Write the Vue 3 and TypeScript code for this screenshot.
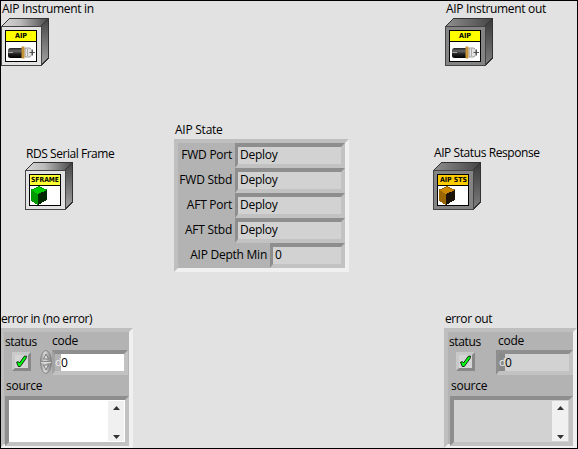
<script setup lang="ts">
type Kind = 'aip' | 'frame' | 'status'
interface Terminal { label: string; tag: string; kind: Kind; output: boolean; cls: string }

const leftTerminals: Terminal[] = [
  { label: 'AIP Instrument in', tag: 'AIP', kind: 'aip', output: false, cls: 'instrument' },
  { label: 'RDS Serial Frame', tag: 'SFRAME', kind: 'frame', output: false, cls: 'serial' },
]
const rightTerminals: Terminal[] = [
  { label: 'AIP Instrument out', tag: 'AIP', kind: 'aip', output: true, cls: 'instrument' },
  { label: 'AIP Status Response', tag: 'AIP STS', kind: 'status', output: true, cls: 'response' },
]
const columns = [
  { id: 'inputs', terminals: leftTerminals, error: 'error in (no error)', output: false },
  { id: 'outputs', terminals: rightTerminals, error: 'error out', output: true },
]
const states = [
  { name: 'FWD Port', value: 'Deploy' },
  { name: 'FWD Stbd', value: 'Deploy' },
  { name: 'AFT Port', value: 'Deploy' },
  { name: 'AFT Stbd', value: 'Deploy' },
]
const tagFill: Record<Kind, string> = { aip: '#ffff00', frame: '#ffff33', status: '#ffcc00' }
const tagWidth: Record<Kind, number> = { aip: 12, frame: 28, status: 27 }
const tagX: Record<Kind, number> = { aip: 14, frame: 6, status: 7 }
const cubeColors: Record<string, string[]> = {
  frame: ['#00cc00', '#009900', '#002b00'],
  status: ['#cc8800', '#996600', '#1c1408'],
}
</script>

<template>
  <main class="panel">
    <svg class="defs" width="0" height="0">
      <defs>
        <linearGradient id="topIn" x1="0" x2="1"><stop offset="0" stop-color="#d8d8d8" /><stop offset=".4" stop-color="#bbb" /><stop offset="1" stop-color="#444" /></linearGradient>
        <linearGradient id="sideIn" x1="0" y1="0" x2="0" y2="1"><stop offset="0" stop-color="#444" /><stop offset="1" stop-color="#a5a5a5" /></linearGradient>
        <linearGradient id="topOut" x1="0" x2="1"><stop offset="0" stop-color="#909090" /><stop offset="1" stop-color="#444" /></linearGradient>
        <linearGradient id="sideOut" x1="0" y1="0" x2="0" y2="1"><stop offset="0" stop-color="#383838" /><stop offset="1" stop-color="#808080" /></linearGradient>
        <linearGradient id="barrel" x1="0" y1="0" x2="0" y2="1"><stop offset="0" stop-color="#222" /><stop offset=".3" stop-color="#666" /><stop offset=".6" stop-color="#222" /><stop offset="1" stop-color="#000" /></linearGradient>
        <linearGradient id="knob" x1="0" x2="1"><stop offset="0" stop-color="#909090" /><stop offset=".4" stop-color="#ddd" /><stop offset="1" stop-color="#777" /></linearGradient>
      </defs>
    </svg>

    <section v-for="col in columns" :key="col.id" class="column" :class="col.id">
      <div v-for="t in col.terminals" :key="t.label" class="terminal" :class="t.cls">
        <span class="label">{{ t.label }}</span>
        <svg class="box" width="48" height="48" viewBox="0 0 48 48" shape-rendering="crispEdges">
          <path d="M0 8 8 0H48L40 8Z" :fill="t.output ? 'url(#topOut)' : 'url(#topIn)'" />
          <path d="M40 8 48 0V40L40 48Z" :fill="t.output ? 'url(#sideOut)' : 'url(#sideIn)'" />
          <path d="M.5 8.5 8.5.5H47.5V40L40 47.5M47.5.5 40 8" fill="none" stroke="#333" />
          <rect x=".5" y="8.5" width="40" height="39" :fill="t.output ? '#848484' : '#e2e2e2'" stroke="#444" />
          <rect x="4.5" y="12.5" width="31" height="31" fill="#fff" stroke="#000" />
          <rect x="5" y="13" width="30" height="10" :fill="tagFill[t.kind]" />
          <rect x="5" y="23" width="30" height="1" fill="#000" />
          <text class="tag" :x="tagX[t.kind]" y="20" :textLength="tagWidth[t.kind]" lengthAdjust="spacingAndGlyphs">{{ t.tag }}</text>
          <g v-if="t.kind === 'aip'" shape-rendering="auto">
            <rect x="7" y="30" width="16" height="10" rx="2.500" fill="url(#barrel)" />
            <path d="M7.500 34.500H12" stroke="#aaa" />
            <path d="M24 30H29L30.500 32V37L29 39H24Z" fill="#e4e4e4" stroke="#888" stroke-width=".8" />
            <path d="M26.500 31V38" stroke="#aaa" />
            <rect x="20.500" y="28.500" width="3" height="12" fill="#c69238" />
            <path d="M31.500 31.500V37.500M28.500 34.500H34" stroke="#444" stroke-width=".9" fill="none" />
          </g>
          <g v-else>
            <path d="M6 28 14 24 22 28 13 32.500Z" :fill="cubeColors[t.kind][0]" />
            <path d="M6 28 13 32V43L6 39Z" :fill="cubeColors[t.kind][1]" />
            <path d="M13 32 22 28V38L13 43Z" :fill="cubeColors[t.kind][2]" />
            <path d="M6.5 28 14 24.500 21.500 28" fill="none" :stroke="cubeColors[t.kind][1]" />
          </g>
        </svg>
      </div>

      <div class="error" :class="{ out: col.output }">
        <span class="label title">{{ col.error }}</span>
        <div class="cluster errors">
          <div class="top">
            <div class="status">
              <span class="label">status</span>
              <span class="button">
                <svg width="13" height="13" viewBox="0 0 13 13"><path d="M1.500 7.300 3.300 6.600 4.500 8 9.200 1.300 11.500 1 11 3.500 5.300 11.500H3.300Z" fill="#0f1" stroke="#000" stroke-width=".8" /></svg>
              </span>
            </div>
            <div class="code">
              <span class="label">code</span>
              <div class="entry">
                <svg v-if="!col.output" class="spin" width="12" height="24" viewBox="0 0 12 24">
                  <ellipse cx="6" cy="12" rx="5.500" ry="11.500" fill="url(#knob)" stroke="#888" />
                  <path d="M1 11.500H11" stroke="#888" /><path d="M1 12.500H11" stroke="#ddd" />
                  <path d="M3.500 9 6 4 8.500 9ZM3.500 15 6 20 8.500 15Z" fill="#ddd" stroke="#666" stroke-width=".8" />
                </svg>
                <div class="well number"><i class="radix">d</i><span class="label">0</span></div>
              </div>
            </div>
          </div>
          <span class="label source-label">source</span>
          <div class="well source">
            <div class="scroll">
              <svg width="7" height="4" viewBox="0 0 7 4"><path d="M0 4 3.500 0 7 4Z" fill="#333" /></svg>
              <svg width="7" height="4" viewBox="0 0 7 4"><path d="M0 0H7L3.500 4Z" fill="#333" /></svg>
            </div>
          </div>
        </div>
      </div>
    </section>

    <section class="state">
      <span class="label title">AIP State</span>
      <div class="cluster">
        <div v-for="s in states" :key="s.name" class="row">
          <span class="label">{{ s.name }}</span>
          <div class="well field"><span class="label">{{ s.value }}</span></div>
        </div>
        <div class="row">
          <span class="label">AIP Depth Min</span>
          <div class="well field short"><span class="label">0</span></div>
        </div>
      </div>
    </section>
  </main>
</template>

<style>
body { margin: 0; }
</style>

<style scoped>
* { box-sizing: border-box; }
.panel {
  width: 578px; height: 449px; border: 1px solid #000; background: #e2e2e2; overflow: hidden;
  display: grid; grid-template-columns: 173px 258px 145px; grid-template-rows: 447px;
  font: 12px/16px "Open Sans", "Noto Sans", sans-serif; color: #000;
}
.defs { position: absolute; }
.label { display: block; white-space: nowrap; letter-spacing: -0.25px; height: 16px; }
.column { display: flex; flex-direction: column; grid-row: 1; }
.inputs { grid-column: 1; }
.outputs { grid-column: 3; }
.state { grid-column: 2; grid-row: 1; padding-top: 121px; }
.box { display: block; }
.terminal .label { padding-left: 1px; letter-spacing: -0.32px; }
.terminal { height: 65px; display: flex; flex-direction: column; justify-content: space-between; }
.outputs .instrument { margin-left: 13px; }
.serial, .response { margin-top: 79px; margin-left: 24px; }
.serial .label, .response .label { position: relative; top: 1px; letter-spacing: -0.45px; }
.response { margin-left: 1px; }
.response .label { top: 0; letter-spacing: -0.42px; }
.tag { font: bold 7px "DejaVu Sans", sans-serif; fill: #000; }

.cluster {
  background: #b3b3b3; border: 4px solid; border-color: #bfbfbf #f0f0f0 #f0f0f0 #bfbfbf;
}
.well {
  border: 4px solid; border-color: #8e8e8e #c2c2c2 #c2c2c2 #8e8e8e; background: #d2d2d2;
}
.state .cluster { width: 175px; height: 133px; }
.state .title { margin-bottom: 1px; padding-left: 1px; }
.row { display: flex; justify-content: flex-end; height: 25px; gap: 3px; }
.row > .label { padding-top: 4px; height: 25px; }
.field { width: 110px; padding-left: 2px; border-left-width: 3px; }
.short { width: 75px; }
.field .label { height: 17px; }

.error { margin-top: 101px; margin-left: -1px; }
.outputs .error { margin-left: 12px; }
.error .title { padding-left: 1px; margin-bottom: 1px; letter-spacing: -0.4px; }
.errors { width: 133px; height: 120px; }
.top { display: flex; height: 43px; }
.status { width: 32px; padding: 2px 0 0 1px; }
.status .label { letter-spacing: -0.35px; }
.out .status { width: 48px; }
.button {
  display: flex; width: 19px; height: 19px; margin: 2px 0 0 7px; border: 3px solid;
  border-color: #c9c9c9 #888 #888 #c9c9c9; background: #d5d5d5;
}
.code { padding-left: 4px; padding-top: 1px; }
.out .code { padding-left: 0; }
.code > .label { margin-left: 12px; }
.entry { display: flex; margin-top: 1px; }
.out .code > .label { margin-left: 2px; }
.number { display: flex; width: 76px; height: 25px; background: #fff; border-left-width: 3px; }
.number .label { margin-top: 1px; }
.out .number { background: #d2d2d2; width: 77px; }
.radix { width: 6px; background: #b3b3b3; color: #eee; font-style: normal; font-size: 11px; }
.inputs .number { border-left-color: #a2a2a2; }
.out .radix { background: #888; }
.source-label { padding-left: 2px; margin-top: 3px; }
.out .source-label { padding-left: 3px; }
.source { margin-top: 2px; margin-left: 1px; width: 124px; height: 50px; background: #fff; display: flex; justify-content: flex-end; }
.out .source { background: #d2d2d2; margin-left: 2px; width: 123px; }
.scroll { width: 16px; margin: 1px; background: #f0f0f0; display: flex; flex-direction: column; justify-content: space-between; align-items: center; padding: 5px 0 2px; }
</style>
